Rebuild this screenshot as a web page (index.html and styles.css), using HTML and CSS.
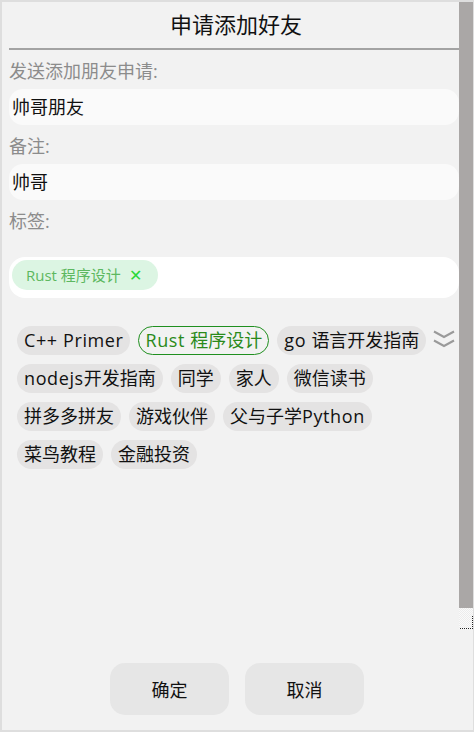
FILE: index.html
```html
<!DOCTYPE html>
<html lang="zh">
<head>
<meta charset="utf-8">
<title>申请添加好友</title>
<link rel="stylesheet" href="styles.css">
</head>
<body>
<div class="window">
  <div class="main">
    <div class="header">申请添加好友</div>
    <div class="rule"></div>
    <div class="label">发送添加朋友申请:</div>
    <div class="input input-soft">帅哥朋友</div>
    <div class="label">备注:</div>
    <div class="input input-soft">帅哥</div>
    <div class="label">标签:</div>
    <div class="tagbox">
      <span class="picked">Rust 程序设计<span class="picked-x">✕</span></span>
    </div>
    <div class="tagarea">
      <div class="taglist">
        <span class="tag"><span class="lat">C++ Primer</span></span>
        <span class="tag tag-on"><span class="lat">Rust </span>程序设计</span>
        <span class="tag"><span class="lat">go </span>语言开发指南</span>
        <span class="tag"><span class="lat">nodejs</span>开发指南</span>
        <span class="tag">同学</span>
        <span class="tag">家人</span>
        <span class="tag">微信读书</span>
        <span class="tag">拼多多拼友</span>
        <span class="tag">游戏伙伴</span>
        <span class="tag">父与子学<span class="lat">Python</span></span>
        <span class="tag">菜鸟教程</span>
        <span class="tag">金融投资</span>
      </div>
      <div class="more">
        <svg width="22" height="18" viewBox="0 0 22 18"><path d="M1 1.5 L11 7 L21 1.5 M1 10.5 L11 16 L21 10.5" fill="none" stroke="#9a9a9a" stroke-width="2"/></svg>
      </div>
    </div>
    <div class="actions">
      <button class="btn">确定</button>
      <button class="btn">取消</button>
    </div>
  </div>
  <div class="scrollbar">
    <div class="thumb"></div>
    <div class="track-end"><div class="focus"></div></div>
  </div>
</div>
</body>
</html>
```
FILE: styles.css
```css
html, body {
  margin: 0;
  padding: 0;
  background: #f2f2f2;
}
body {
  font-family: "Open Sans", "Noto Sans CJK SC", sans-serif;
}
.window {
  box-sizing: border-box;
  width: 474px;
  height: 732px;
  border: 2px solid #dedede;
  border-right-width: 1px;
  background: #f2f2f2;
  display: flex;
}
.main {
  flex: 1;
  display: flex;
  flex-direction: column;
  padding-left: 7px;
}
.header {
  height: 46px;
  line-height: 44px;
  font-size: 22px;
  text-align: center;
  padding-left: 4px;
  color: #111;
}
.rule {
  height: 2px;
  background: #a3a3a3;
}
.label {
  height: 24px;
  line-height: 24px;
  margin-top: 9px;
  font-size: 18px;
  color: #8c8c8c;
}
.input {
  margin-top: 6px;
  height: 36px;
  line-height: 36px;
  border-radius: 14px;
  padding-left: 3px;
  font-size: 18px;
  color: #111;
}
.input-soft {
  background: #fafafa;
}
.tagbox {
  margin-top: 24px;
  box-sizing: border-box;
  height: 41px;
  background: #fff;
  border-radius: 16px;
  padding: 3px 3px;
  display: flex;
  align-items: flex-start;
}
.picked {
  height: 30px;
  line-height: 30px;
  border-radius: 15px;
  background: #dcf5e3;
  color: #5cb860;
  font-size: 15px;
  padding: 0 16px 0 14px;
  display: inline-flex;
  align-items: center;
}
.picked-x {
  color: #2ad83a;
  font-size: 16px;
  margin-left: 8px;
}
.tagarea {
  margin-top: 28px;
  display: flex;
  align-items: flex-start;
  padding-left: 8px;
}
.taglist {
  width: 414px;
  display: flex;
  flex-wrap: wrap;
  gap: 9px 8px;
}
.tag {
  box-sizing: border-box;
  height: 29px;
  line-height: 29px;
  padding: 0 7px;
  border-radius: 15px;
  background: #e4e3e3;
  font-size: 18px;
  color: #111;
  white-space: nowrap;
}
.lat {
  letter-spacing: 0.6px;
}
.tag-on {
  border: 1px solid #1f8f1f;
  line-height: 27px;
  padding: 0 6px;
  color: #2a8a1a;
  background: transparent;
}
.more {
  margin-left: 2px;
  padding-top: 4px;
}
.actions {
  margin-top: auto;
  margin-bottom: 15px;
  display: flex;
  justify-content: center;
  gap: 16px;
  padding-left: 6px;
}
.btn {
  width: 119px;
  height: 52px;
  border: none;
  border-radius: 15px;
  background: #e6e6e6;
  font-family: "Open Sans", "Noto Sans CJK SC", sans-serif;
  font-size: 18px;
  color: #111;
}
.scrollbar {
  width: 14px;
  display: flex;
  flex-direction: column;
}
.thumb {
  height: 606px;
  background: #aaa7a6;
}
.track-end {
  height: 21px;
  background-color: #f7f7f7;
  background-image: repeating-conic-gradient(#ececec 0 25%, #fafafa 0 50%);
  background-size: 2px 2px;
  position: relative;
}
.focus {
  position: absolute;
  left: 1px;
  right: 0;
  top: 8px;
  bottom: 0;
  border-right: 1px dotted #222;
  border-bottom: 1px dotted #222;
}
```
